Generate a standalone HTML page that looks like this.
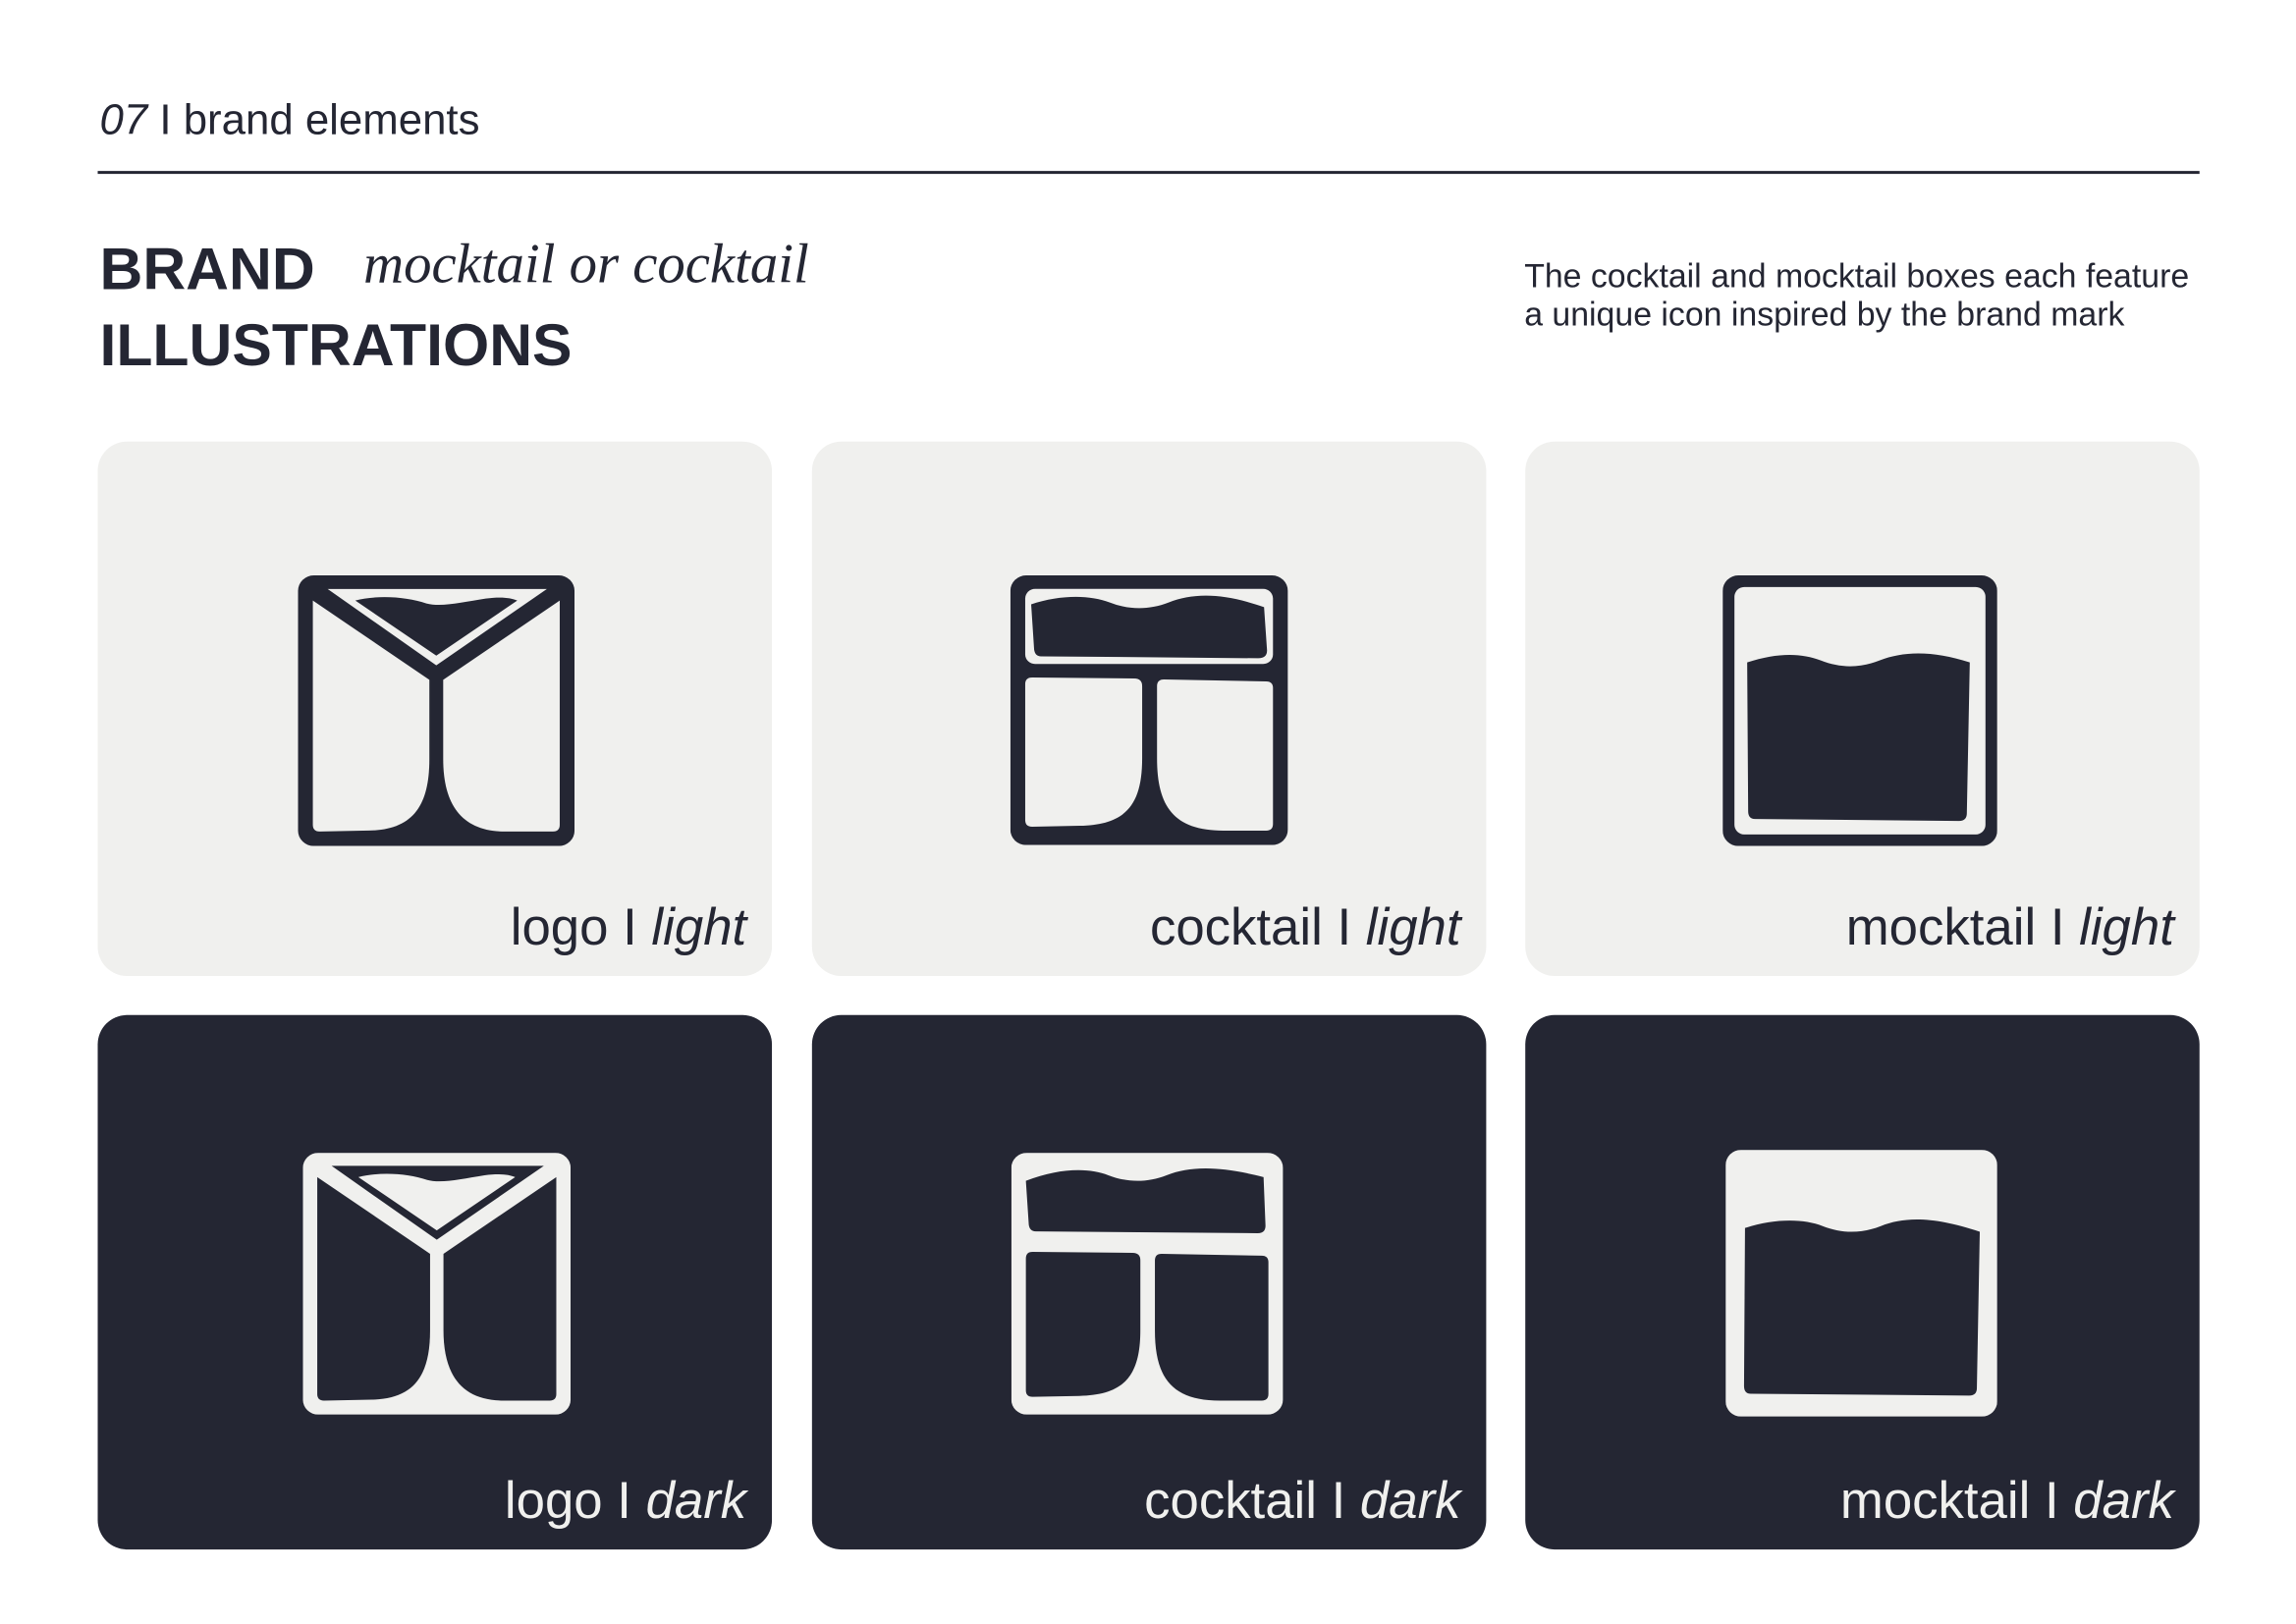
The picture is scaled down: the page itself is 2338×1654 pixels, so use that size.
<!DOCTYPE html>
<html><head><meta charset="utf-8"><style>
*{margin:0;padding:0;box-sizing:border-box}
body{width:2338px;height:1653px;background:#fff;position:relative;overflow:hidden;font-family:"Liberation Sans",sans-serif;color:#242633}
#w{position:absolute;left:0;top:0;width:2350px;height:1662px;transform:scale(0.995);transform-origin:0 0}
.a{position:absolute;white-space:nowrap}
.card{position:absolute;width:690px;height:547px;border-radius:30px}
.lt{background:#f0f0ee}
.dk{background:#242633}
.lbl{position:absolute;right:26px;bottom:23px;font-size:53px;line-height:1}
.dk .lbl{color:#f0f0ee}
svg{position:absolute}
</style></head><body><div id="w">
<div class="a" style="left:102px;top:98px;font-size:44px"><i>07</i> I brand elements</div>
<div class="a" style="left:100px;top:175px;width:2151px;height:3px;background:#242633"></div>
<div class="a" style="left:102px;top:236px;font-size:61px;font-weight:bold;line-height:78px">BRAND<br>ILLUSTRATIONS</div>
<div class="a" style="left:372px;top:238px;font-size:57px;font-family:'Liberation Serif',serif;font-style:italic">mocktail or cocktail</div>
<div class="a" style="left:1560px;top:264px;font-size:34px;line-height:39px">The cocktail and mocktail boxes each feature<br>a unique icon inspired by the brand mark</div>

<div class="card lt" style="left:100px;top:452px"><div class="lbl">logo I <i>light</i></div></div>
<div class="card lt" style="left:831px;top:452px"><div class="lbl">cocktail I <i>light</i></div></div>
<div class="card lt" style="left:1561px;top:452px"><div class="lbl">mocktail I <i>light</i></div></div>
<div class="card dk" style="left:100px;top:1039px"><div class="lbl">logo I <i>dark</i></div></div>
<div class="card dk" style="left:831px;top:1039px"><div class="lbl">cocktail I <i>dark</i></div></div>
<div class="card dk" style="left:1561px;top:1039px"><div class="lbl">mocktail I <i>dark</i></div></div>

<svg style="left:305px;top:589px" width="283" height="277" viewBox="0 0 280 280" preserveAspectRatio="none">
<rect width="280" height="280" rx="16" fill="#242633"/>
<path d="M15,26 L133,108 L133,190 C133,240 115,263 72,264 L22,265 Q15,265 15,258 Z" fill="#f0f0ee"/>
<path d="M265,26 L147,108 L147,190 C147,240 168,265 210,265 L258,265 Q265,265 265,258 Z" fill="#f0f0ee"/>
<path d="M30,14 L252,14 L140,93 Z" fill="#f0f0ee"/>
<path d="M58,26 C80,20 110,22 130,29 C145,33 165,28 190,24 C205,22 215,23 222,26 L140,83 Z" fill="#242633"/>
</svg>
<svg style="left:310px;top:1180px" width="274" height="268" viewBox="0 0 280 280" preserveAspectRatio="none">
<rect width="280" height="280" rx="16" fill="#f0f0ee"/>
<path d="M15,26 L133,108 L133,190 C133,240 115,263 72,264 L22,265 Q15,265 15,258 Z" fill="#242633"/>
<path d="M265,26 L147,108 L147,190 C147,240 168,265 210,265 L258,265 Q265,265 265,258 Z" fill="#242633"/>
<path d="M30,14 L252,14 L140,93 Z" fill="#242633"/>
<path d="M58,26 C80,20 110,22 130,29 C145,33 165,28 190,24 C205,22 215,23 222,26 L140,83 Z" fill="#f0f0ee"/>
</svg>
<svg style="left:1034px;top:589px" width="284" height="276" viewBox="0 0 280 280" preserveAspectRatio="none">
<rect width="280" height="280" rx="16" fill="#242633"/>
<rect x="15" y="14" width="250" height="78" rx="10" fill="#f0f0ee"/>
<path d="M21,30 C50,20 80,20 100,28 C120,36 140,36 160,28 C185,18 215,18 256,33 L259,78 Q259,86 250,86 L31,84 Q25,84 24,77 Z" fill="#242633"/>
<path d="M22,106 L125,107 Q133,107 133,115 L133,190 C133,240 115,259 70,260 L22,261 Q15,261 15,254 L15,113 Q15,106 22,106 Z" fill="#f0f0ee"/>
<path d="M155,108 L258,110 Q265,110 265,117 L265,258 Q265,265 258,265 L215,265 C165,265 148,240 148,190 L148,115 Q148,108 155,108 Z" fill="#f0f0ee"/>
</svg>
<svg style="left:1035px;top:1180px" width="278" height="268" viewBox="0 0 280 280" preserveAspectRatio="none">
<rect width="280" height="280" rx="16" fill="#f0f0ee"/>
<path d="M15,30 C50,16 80,16 100,24 C120,32 140,32 160,24 C185,14 215,14 260,26 L262,78 Q262,86 254,86 L25,84 Q19,84 18,77 Z" fill="#242633"/>
<path d="M22,106 L125,107 Q133,107 133,115 L133,190 C133,240 115,259 70,260 L22,261 Q15,261 15,254 L15,113 Q15,106 22,106 Z" fill="#242633"/>
<path d="M155,108 L258,110 Q265,110 265,117 L265,258 Q265,265 258,265 L215,265 C165,265 148,240 148,190 L148,115 Q148,108 155,108 Z" fill="#242633"/>
</svg>
<svg style="left:1763px;top:589px" width="281" height="277" viewBox="0 0 280 280" preserveAspectRatio="none">
<rect width="280" height="280" rx="16" fill="#242633"/>
<rect x="12" y="12" width="256" height="256" rx="10" fill="#f0f0ee"/>
<path d="M25,90 C55,80 80,80 100,88 C120,96 140,96 160,88 C185,78 215,78 252,90 L249,246 Q249,254 241,254 L33,252 Q26,252 26,244 Z" fill="#242633"/>
</svg>
<svg style="left:1766px;top:1177px" width="278" height="273" viewBox="0 0 280 280" preserveAspectRatio="none">
<rect width="280" height="280" rx="16" fill="#f0f0ee"/>
<path d="M20,82 C50,72 80,72 100,80 C120,88 140,88 160,80 C185,70 215,70 262,86 L259,250 Q259,258 251,258 L26,256 Q19,256 19,248 Z" fill="#242633"/>
</svg>
</div></body></html>
